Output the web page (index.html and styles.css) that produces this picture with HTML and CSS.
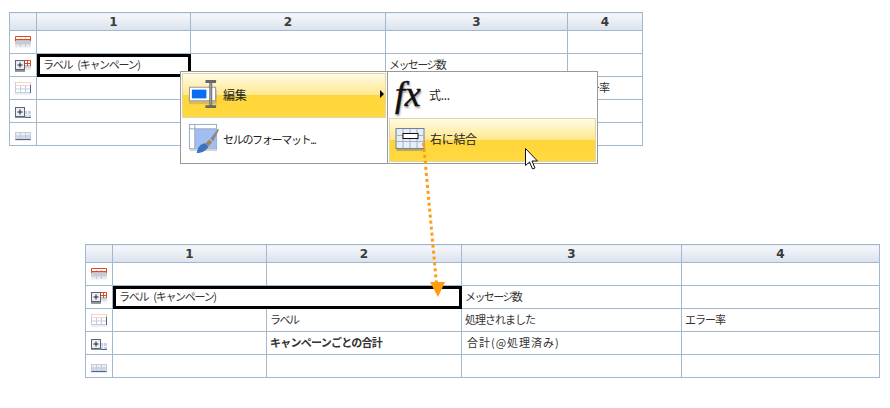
FILE: index.html
```html
<!doctype html>
<html lang="ja">
<head>
  <meta charset="UTF-8">
  <title>右に結合</title>
  <link rel="stylesheet" href="styles.css">
</head>

<body>
  <svg class="defs" width="0" height="0">
    <defs>
      <linearGradient id="fade" x1="0" y1="0" x2="0" y2="1">
        <stop offset="0" stop-color="#b9bdc4"/>
        <stop offset="1" stop-color="#fff"/>
      </linearGradient>
      <linearGradient id="dark" x1="0" y1="0" x2="0" y2="1">
        <stop offset="0" stop-color="#f3f5f9"/>
        <stop offset="1" stop-color="#c9d2e0"/>
      </linearGradient>
      <symbol id="row-head" viewBox="0 0 18 14">
        <rect x="1" y="5" width="16" height="9" fill="url(#fade)"/>
        <path d="M6.500 3v9M11.500 3v9M1.500 8.500h15" stroke="#c4c8cf" fill="none"/>
        <path d="M1.500 6V1.500h15V6M1.500 4.500h15" stroke="#e2491f" fill="none"/>
      </symbol>
      <symbol id="row-body" viewBox="0 0 18 14">
        <rect x="1.500" y="1.500" width="15" height="10" fill="#fff" stroke="#c3cbdb"/>
        <path d="M1.500 1.500h15M1.500 4.500h15" stroke="#f8d5cc" fill="none"/>
        <path d="M6.500 5v6M11.500 5v6M1.500 8h15" stroke="#c3cbdb" fill="none"/>
        <path d="M16.500 4v8" stroke="#54698c" fill="none"/>
        <rect x="1" y="12" width="16" height="2" fill="#eceef1"/>
      </symbol>
      <symbol id="row-foot" viewBox="0 0 18 14">
        <rect x="1.500" y="5.500" width="15" height="7" fill="url(#dark)" stroke="#c3cbdb"/>
        <path d="M6.500 6v6M11.500 6v6M1.500 9h15" stroke="#c3cbdb" fill="none"/>
        <path d="M1.500 12.500h15" stroke="#4f668c" fill="none"/>
        <rect x="1" y="13" width="16" height="1" fill="#e6e8ec"/>
      </symbol>
      <symbol id="plus-box" viewBox="0 0 18 14">
        <rect x="1" y="9" width="10" height="2" fill="#8b8f96"/>
        <rect x="1.500" y=".5" width="9" height="9" fill="#e9edf4" stroke="#5b6478"/>
        <path d="M3.500 5h5M6 2.500v5" stroke="#222" fill="none"/>
      </symbol>
      <symbol id="row-group-head" viewBox="0 0 18 14">
        <rect x="9" y="7" width="8" height="6" fill="url(#fade)"/>
        <path d="M9 2.500h7.500V8M9 5.500h7.500M13.500 3v5" stroke="#e2491f" fill="none"/>
        <rect x="1" y="11" width="10" height="3" fill="#9a9da3"/>
      </symbol>
      <symbol id="row-group-foot" viewBox="0 0 18 14">
        <rect x="3" y="7" width="14" height="7" fill="#c8d2e4"/>
        <path d="M3 13.500h14" stroke="#4f668c" fill="none"/>
        <path d="M13.500 7v6M8 10.500h9" stroke="#eef0f4" fill="none"/>
      </symbol>
    </defs>
  </svg>

  <table class="sheet sheet-top">
    <colgroup>
      <col class="c-icon"><col class="c-a"><col class="c-b"><col class="c-c"><col class="c-d">
    </colgroup>
    <tr class="head"><th></th><th>1</th><th>2</th><th>3</th><th>4</th></tr>
    <tr>
      <td class="icon"><svg><use href="#row-head"/></svg></td>
      <td></td><td></td><td></td><td></td>
    </tr>
    <tr>
      <td class="icon"><svg><use href="#row-group-head"/><use href="#plus-box" y="2"/></svg></td>
      <td class="selected">ラベル (キャンペーン)</td><td></td><td class="kana">メッセージ数</td><td></td>
    </tr>
    <tr>
      <td class="icon"><svg><use href="#row-body"/></svg></td>
      <td></td><td></td><td></td><td class="rate">エラー率</td>
    </tr>
    <tr>
      <td class="icon"><svg><use href="#row-group-foot"/><use href="#plus-box" y="3"/></svg></td>
      <td></td><td></td><td></td><td></td>
    </tr>
    <tr>
      <td class="icon"><svg><use href="#row-foot"/></svg></td>
      <td></td><td></td><td></td><td></td>
    </tr>
  </table>

  <table class="sheet sheet-bottom">
    <colgroup>
      <col class="c-icon"><col class="c-a"><col class="c-b"><col class="c-c"><col class="c-d">
    </colgroup>
    <tr class="head"><th></th><th>1</th><th>2</th><th>3</th><th>4</th></tr>
    <tr>
      <td class="icon"><svg><use href="#row-head"/></svg></td>
      <td></td><td></td><td></td><td></td>
    </tr>
    <tr>
      <td class="icon"><svg><use href="#row-group-head"/><use href="#plus-box" y="2"/></svg></td>
      <td class="selected" colspan="2">ラベル (キャンペーン)</td><td class="kana">メッセージ数</td><td></td>
    </tr>
    <tr>
      <td class="icon"><svg><use href="#row-body"/></svg></td>
      <td></td><td class="kana">ラベル</td><td>処理されました</td><td>エラー率</td>
    </tr>
    <tr>
      <td class="icon"><svg><use href="#row-group-foot"/><use href="#plus-box" y="3"/></svg></td>
      <td></td><td class="strong">キャンペーンごとの合計</td><td class="wide">合計(@処理済み)</td><td></td>
    </tr>
    <tr>
      <td class="icon"><svg><use href="#row-foot"/></svg></td>
      <td></td><td></td><td></td><td></td>
    </tr>
  </table>

  <div class="menu">
    <ul class="panel panel-main">
      <li class="item active">
        <svg class="item-icon" viewBox="0 0 32 32">
          <rect x="1" y="11" width="29" height="15" fill="#8d8d8d" opacity=".35"/>
          <rect x="1.500" y="8.500" width="27" height="14" fill="#fff" stroke="#8d97a8"/>
          <rect x="4" y="11" width="15" height="9" fill="#0a6cf0"/>
          <path d="M18 2.500h11M18 28.500h11M23.500 3v25" stroke="#686868" stroke-width="3" fill="none"/>
          <path d="M23.500 4v23" stroke="#b0b0b0" fill="none"/>
        </svg>
        <span>編集</span>
        <i class="sub-arrow"></i>
      </li>
      <li class="item">
        <svg class="item-icon" viewBox="0 0 32 32">
          <rect x="1.500" y="1.500" width="28" height="25" fill="#fff" stroke="#98a8c0"/>
          <rect x="7" y="6" width="22" height="20" fill="#a3bdf3"/>
          <path d="M7 2v24M2 6h27" stroke="#98a8c0" fill="none"/>
          <rect x="2" y="27" width="28" height="2" fill="#aaa" opacity=".5"/>
          <path d="M9 31c1-6 4-10 9-10l3 3c-1 4-6 7-12 7z" fill="#3c74c4"/>
          <path d="M18 21l3 3 4-4-3-3z" fill="#a58352"/>
          <path d="M23 16l8-10 1 1-6 12z" fill="#8a8a8a"/>
        </svg>
        <span class="tight">セルのフォーマット...</span>
      </li>
    </ul>
    <ul class="panel panel-sub">
      <li class="item">
        <span class="fx">fx</span>
        <span>式...</span>
      </li>
      <li class="item active">
        <svg class="item-icon" viewBox="0 0 30 24">
          <rect x=".5" y=".5" width="28" height="20" fill="#e9edf5" stroke="#6f7f9c"/>
          <path d="M7.500 1v19M14.500 1v19M21.500 1v19M1 7.500h27M1 13.500h27" stroke="#a3b0c8" fill="none"/>
          <rect x="7.500" y="5.500" width="15" height="5" fill="#fff" stroke="#111"/>
          <rect x="1" y="21" width="29" height="2" fill="#777" opacity=".5"/>
        </svg>
        <span>右に結合</span>
      </li>
    </ul>
  </div>

  <!-- cursor and the arrow run over the menu and both tables -->
  <svg class="overlay" width="890" height="408">
    <path d="M423.500 143L436.500 284" stroke="#ff9c12" stroke-width="3" stroke-dasharray="3 3" fill="none"/>
    <path d="M430 282h15l-7 15z" fill="#ff9c12"/>
    <path d="M525.500 148.500v17l4-3.500 3 7 2.500-1-3-7h5.500z" fill="#fff" stroke="#111"/>
  </svg>
</body>
</html>
```

FILE: styles.css
```css
*{
  box-sizing: border-box;
}

body{
  margin: 0;
  width: 890px;
  height: 408px;
  overflow: hidden;
  color: #333;
  font-family: "Noto Sans CJK JP", sans-serif;
  font-size: 11px;
  background-color: #fff;
}

.defs{
  display: block;
}

.sheet{
  table-layout: fixed;
  border-collapse: collapse;
}

.sheet th,
.sheet td{
  padding: 0 0 2px 3px;
  border: 1px solid #a0b8d0;
  height: 23px;
  letter-spacing: -1px;
  white-space: nowrap;
  overflow: hidden;
}

.sheet .head th{
  padding: 0;
  height: 18px;
  color: #3a3a3a;
  font-family: "DejaVu Sans", sans-serif;
  font-size: 12px;
  font-weight: bold;
  letter-spacing: 0;
  background: linear-gradient(#f5f7fa, #dbe2ed);
}

.sheet .icon{
  padding: 0 0 0 4px;
}

.icon svg{
  display: block;
  width: 18px;
  height: 14px;
}

.sheet .selected{
  padding-left: 6px;
  letter-spacing: -1.300px;
  word-spacing: 4px;
  outline: 3px solid #000;
  outline-offset: -3px;
}

.sheet .kana{
  letter-spacing: -1.600px;
}

.sheet .wide{
  padding-left: 5px;
  letter-spacing: 1px;
}

.sheet .rate{
  padding-left: 1px;
}

.sheet .strong{
  font-weight: bold;
  letter-spacing: -.750px;
}

.c-icon{
  width: 27px;
}

.c-a{
  width: 154px;
}

.c-b{
  width: 195px;
}

.sheet-top{
  margin: 12px 0 0 9px;
  width: 634px;
}

.sheet-top .c-c{
  width: 182px;
}

.sheet-top .c-d{
  width: 75px;
}

.sheet-bottom{
  margin: 98px 0 0 85px;
  width: 795px;
}

.sheet-bottom .c-c{
  width: 220px;
}

.sheet-bottom .c-d{
  width: 198px;
}

.menu{
  position: absolute;
  top: 71px;
  left: 180px;
  display: flex;
  height: 93px;
}

.panel{
  display: flex;
  flex-direction: column;
  margin: 0;
  padding: 1px;
  list-style: none;
  border: 1px solid #999;
  background: #fff;
}

.panel-main{
  width: 208px;
}

.panel-sub{
  margin-left: -1px;
  width: 211px;
}

.item{
  display: flex;
  align-items: center;
  flex: 1;
  padding: 0 0 2px 5px;
  gap: 4px;
  color: #222;
  font-size: 12px;
  letter-spacing: -.3px;
  border: 1px solid transparent;
}

.item.active{
  border-color: #dfd6a4;
  background: linear-gradient(#fffbe6, #ffe88c 49%, #ffd63c 50%, #ffd93f);
}

.item-icon{
  flex: none;
  width: 31px;
  height: 31px;
}

.panel-sub .item-icon{
  margin-top: 2px;
  height: 24px;
}

.tight{
  font-size: 11px;
  letter-spacing: -1.300px;
}

.sub-arrow{
  margin-left: auto;
  margin-right: 1px;
  border-left: 4px solid #000;
  border-top: 4px solid transparent;
  border-bottom: 4px solid transparent;
}

.fx{
  flex: none;
  width: 30px;
  color: #111;
  font-family: "Liberation Serif", serif;
  font-size: 36px;
  font-style: italic;
  line-height: 28px;
  -webkit-text-stroke: .5px #111;
  text-shadow: 1px 2px 2px #999;
}

.overlay{
  position: absolute;
  top: 0;
  left: 0;
  pointer-events: none;
}
```
